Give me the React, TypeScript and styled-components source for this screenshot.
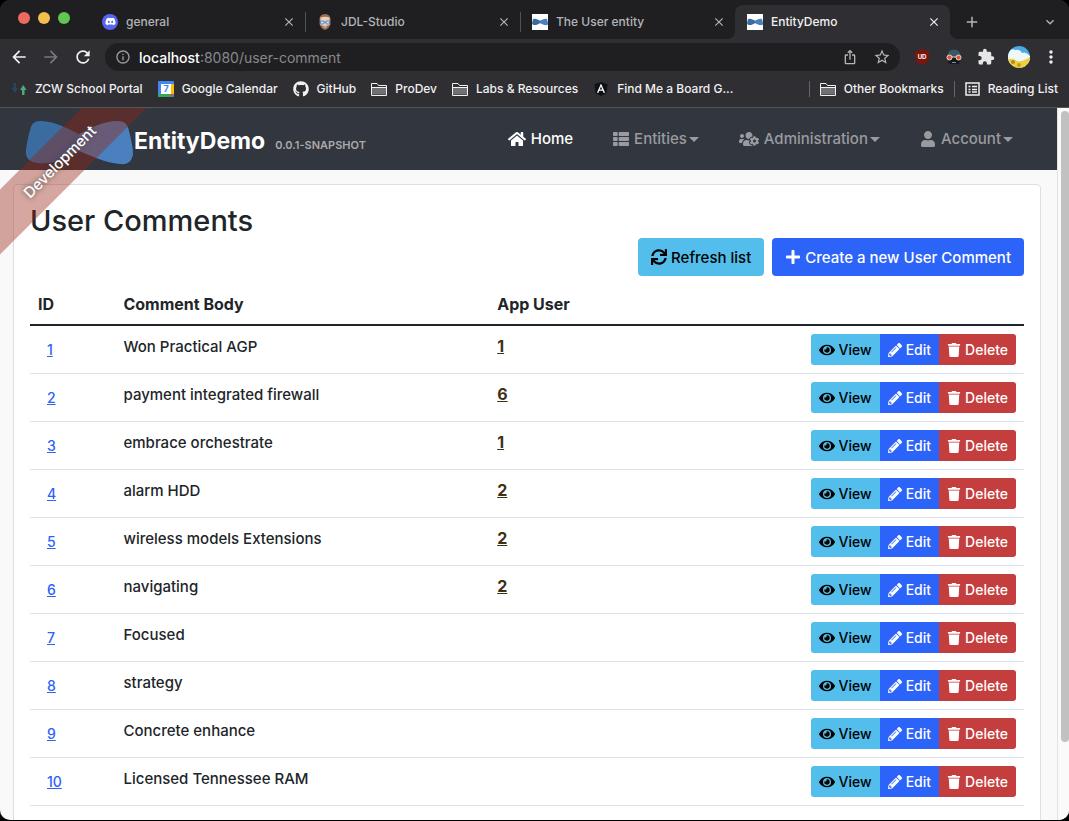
import React from "react";
import styled, { createGlobalStyle, css } from "styled-components";
import {
  FaDiscord,
  FaGithub,
  FaAngular,
  FaHome,
  FaThList,
  FaUsersCog,
  FaUser,
  FaSync,
  FaPlus,
  FaEye,
  FaPencilAlt,
  FaTrash,
} from "react-icons/fa";
import { MdArrowBack, MdArrowForward, MdRefresh, MdExtension, MdInfoOutline, MdStarBorder, MdIosShare, MdClose, MdAdd, MdMoreVert, MdOutlineExpandMore } from "react-icons/md";

const GlobalStyle = createGlobalStyle`
  * { box-sizing: border-box; }
  body {
    margin: 0;
    background: #000;
    font-family: Inter, "Liberation Sans", sans-serif;
    font-weight: 450;
    color: #212529;
  }
  button { font-family: inherit; font-weight: inherit; cursor: pointer; }
  svg { display: block; flex: none; }
`;

const BrowserWindow = styled.div`
  display: flex;
  flex-direction: column;
  height: calc(100vh - 1px);
  border-radius: 10px;
  overflow: hidden;
  background: #2f2f33;
`;

/* ---------- browser chrome ---------- */

const TabStrip = styled.div`
  display: flex;
  align-items: flex-end;
  height: 39px;
  background: #1f1f22;
  padding-right: 11px;
`;

const Lights = styled.div`
  display: flex;
  gap: 8px;
  width: 90px;
  padding-left: 18px;
  height: 36px;
  align-items: center;
  align-self: flex-start;
`;

const Light = styled.span<{ $color: string }>`
  width: 12px;
  height: 12px;
  border-radius: 50%;
  background: ${(p) => p.$color};
`;

const Tab = styled.div<{ $active?: boolean; $divided?: boolean }>`
  position: relative;
  flex: 0 1 215px;
  min-width: 0;
  display: flex;
  align-items: center;
  gap: 8px;
  height: 34px;
  padding: 0 9px 1px 12px;
  font-size: 12px;
  color: ${(p) => (p.$active ? "#f1f1f2" : "#b4b5b8")};
  ${(p) =>
    p.$active &&
    css`
      background: #2f2f33;
      border-radius: 8px 8px 0 0;
      &::before,
      &::after {
        content: "";
        position: absolute;
        bottom: 0;
        width: 8px;
        height: 8px;
      }
      &::before {
        left: -8px;
        background: radial-gradient(circle at 0 0, transparent 8px, #2f2f33 8px);
      }
      &::after {
        right: -8px;
        background: radial-gradient(circle at 100% 0, transparent 8px, #2f2f33 8px);
      }
    `}
  ${(p) =>
    p.$divided &&
    css`
      &::after {
        content: "";
        position: absolute;
        right: -1px;
        top: 7px;
        width: 1px;
        height: 20px;
        background: #515256;
      }
    `}
`;

const TabTitle = styled.span`
  flex: 1;
  overflow: hidden;
  white-space: nowrap;
  text-overflow: ellipsis;
`;

const IconButton = styled.button<{ $size?: number; $color?: string }>`
  display: flex;
  align-items: center;
  justify-content: center;
  flex: none;
  width: ${(p) => p.$size ?? 20}px;
  height: ${(p) => p.$size ?? 20}px;
  padding: 0;
  border: 0;
  background: none;
  color: ${(p) => p.$color ?? "inherit"};
`;

const NewTab = styled.div`
  flex: 1;
  display: flex;
  align-items: center;
  justify-content: space-between;
  height: 34px;
  padding-left: 12px;
  color: #b4b5b8;
`;

const DiscordBadge = styled.span`
  display: flex;
  align-items: center;
  justify-content: center;
  width: 16px;
  height: 16px;
  border-radius: 50%;
  background: #5865f2;
  color: #fff;
`;

const Toolbar = styled.div`
  display: flex;
  align-items: center;
  height: 37px;
  padding: 0 9px 1px 8px;
  background: #2f2f33;
`;

const NavButtons = styled.div`
  display: flex;
  gap: 10px;
  margin-right: 11px;
`;

const AddressBar = styled.div`
  flex: 1;
  display: flex;
  align-items: center;
  gap: 8px;
  height: 28px;
  padding: 0 8px 0 10px;
  border-radius: 14px;
  background: #1f1f22;
  color: #9b9ca0;
`;

const AddressText = styled.div`
  flex: 1;
  font-size: 14px;
  font-weight: 400;
  white-space: nowrap;
  color: #88898d;
  b { font-weight: 450; color: #fff; }
`;

const AddressActions = styled.div`
  display: flex;
  gap: 12px;
  color: #b4b5b8;
`;

const Extensions = styled.div`
  display: flex;
  align-items: center;
  gap: 12px;
  margin-left: 12px;
`;

const BookmarkBar = styled.nav`
  display: flex;
  align-items: center;
  height: 32px;
  padding: 0 11px 6px;
  gap: 15px;
  background: #2f2f33;
  border-bottom: 1px solid #56575b;
`;

const Bookmark = styled.a`
  display: flex;
  align-items: center;
  gap: 8px;
  font-size: 12px;
  white-space: nowrap;
  color: #f1f1f2;
  text-decoration: none;
`;

const BookmarkEnd = styled.div`
  display: flex;
  align-items: center;
  gap: 10px;
  margin-left: auto;
`;

const Divider = styled.span`
  width: 1px;
  height: 16px;
  background: #65666a;
`;

const AngularMark = styled.span`
  display: flex;
  width: 16px;
  justify-content: center;
  color: #0d1118;
  background: radial-gradient(circle, #fff 5px, transparent 5px);
`;

/* ---------- page ---------- */

const Viewport = styled.div`
  flex: 1;
  min-height: 0;
  display: flex;
  background: #f9f9f9;
`;

const Page = styled.div`
  position: relative;
  flex: 1;
  min-width: 0;
  overflow: hidden;
`;

const ScrollTrack = styled.div`
  width: 12px;
  padding: 3px 0 0 3px;
  border-left: 1px solid #e4e4e4;
  background: #fafafa;
`;

const ScrollThumb = styled.div`
  height: 89%;
  border-radius: 5px;
  background: #c1c1c1;
`;

const Ribbon = styled.div`
  position: absolute;
  z-index: 2;
  top: 31px;
  left: -60px;
  width: 240px;
  height: 46px;
  line-height: 46px;
  transform: rotate(-45deg);
  background: rgba(150, 35, 18, 0.4);
  color: #fff;
  font-size: 15px;
  font-weight: 500;
  text-align: center;
  text-shadow: 0 0 5px #444;
  pointer-events: none;
`;

const Navbar = styled.header`
  display: flex;
  align-items: center;
  height: 62px;
  padding: 0 44px 0 25px;
  background: #32363f;
`;

const Brand = styled.a`
  display: flex;
  align-items: center;
  color: #fff;
  text-decoration: none;
  margin-top: 8px;
`;

const BrandName = styled.span`
  padding-bottom: 4px;
  font-size: 23px;
  font-weight: 700;
  line-height: 32px;
`;

const Version = styled.span`
  margin: 4px 0 0 10px;
  font-size: 11px;
  font-weight: 600;
  color: #aaa;
`;

const Menu = styled.nav`
  display: flex;
  gap: 40px;
  margin-left: auto;
`;

const MenuLink = styled.a<{ $active?: boolean }>`
  display: flex;
  align-items: center;
  gap: 5px;
  font-size: 15px;
  font-weight: 500;
  line-height: 26px;
  text-decoration: none;
  color: ${(p) => (p.$active ? "#fff" : "#999b9f")};
`;

const Caret = styled.span`
  margin-left: -3px;
  border: 5px solid transparent;
  border-top-color: currentColor;
  border-bottom: 0;
`;

const Card = styled.main`
  margin: 14px 16px 0 13px;
  min-height: 100%;
  padding: 18px 16px 16px;
  border: 1px solid #dfdfdf;
  border-radius: 4px;
  background: #fff;
`;

const Title = styled.h2`
  margin: 0;
  font-size: 29px;
  line-height: 35px;
  font-weight: 500;
`;

const Actions = styled.div`
  display: flex;
  justify-content: flex-end;
  gap: 8px;
  margin-bottom: 8px;
`;

const tones = {
  info: css`background: #53beec; color: #000;`,
  primary: css`background: #2c63f8; color: #fff;`,
  danger: css`background: #c53e3e; color: #fff;`,
};

const Button = styled.button<{ $tone: keyof typeof tones; $small?: boolean }>`
  display: inline-flex;
  align-items: center;
  gap: 4px;
  height: ${(p) => (p.$small ? 31 : 38)}px;
  padding: 0 ${(p) => (p.$small ? 8 : 13)}px;
  border: 0;
  border-radius: 4px;
  font-size: ${(p) => (p.$small ? 14 : 15)}px;
  font-weight: ${(p) => (p.$small ? 450 : 500)};
  white-space: nowrap;
  ${(p) => tones[p.$tone]}
`;

const ButtonGroup = styled.div`
  display: flex;
  justify-content: flex-end;
  ${Button} { border-radius: 0; }
  ${Button}:first-child { border-radius: 3px 0 0 3px; }
  ${Button}:last-child { border-radius: 0 3px 3px 0; }
`;

const Table = styled.table`
  width: 100%;
  table-layout: fixed;
  border-collapse: separate;
  border-spacing: 0;
  font-size: 15px;
  line-height: 26px;
  th {
    padding: 8px;
    text-align: left;
    font-size: 16px;
    line-height: 24px;
    font-weight: 700;
    border-bottom: 2px solid #212529;
  }
  td {
    padding: 8px;
    vertical-align: top;
    border-bottom: 1px solid #dee2e6;
  }
`;

const Col = styled.col<{ $width?: string }>`
  width: ${(p) => p.$width ?? "auto"};
`;

const IdLink = styled.a`
  display: block;
  padding: 5px 9px;
  font-size: 14px;
  line-height: 21px;
  color: #2c63f8;
`;

const UserLink = styled.a`
  display: inline-block;
  font-size: 16px;
  line-height: 24px;
  font-weight: 700;
  color: #3e2f16;
`;

/* ---------- drawings ---------- */

const BowTieShape = () => (
  <>
    <path d="M17 1 C32 2 43 9 54 14 L54 31 C42 37 29 45 13 43 C4 42 0 38 1 30 C2 21 4 13 6 7 C8 2 11 1 17 1Z" fill="#3a6c9f" />
    <path d="M54 14 C66 8 78 1 93 1 C100 1 103 5 104 11 C106 19 108 27 108 34 C107 41 103 45 95 44 C80 43 67 36 54 31Z" fill="#4a80bd" />
  </>
);

const BowTieLogo = () => (
  <svg width="109" height="46" viewBox="0 0 109 46" aria-hidden="true">
    <BowTieShape />
  </svg>
);

const BowTieFavicon = () => (
  <svg width="16" height="16" viewBox="0 -31 108 108" aria-hidden="true">
    <rect y="-31" width="108" height="108" fill="#fff" />
    <BowTieShape />
  </svg>
);

const JhipsterFace = () => (
  <svg width="16" height="16" viewBox="0 0 16 16" aria-hidden="true">
    <path d="M2.500 5 Q2.500 0.500 8 0 Q13.500 0.500 13.500 5 L13.500 10 Q12 15 8 16 Q4 15 2.500 10Z" fill="#94705c" />
    <path d="M3.500 3.500 Q8 2 12.500 3.500 L12.500 11 Q8 13 3.500 11Z" fill="#f0cdb4" />
    <rect x="3.500" y="7" width="3.500" height="3" rx="1" fill="#cfe2f5" stroke="#4a86c5" />
    <rect x="9" y="7" width="3.500" height="3" rx="1" fill="#cfe2f5" stroke="#4a86c5" />
    <path d="M7 8 H9" stroke="#4a86c5" />
    <path d="M6.500 13 H9.500" stroke="#e8d6ca" />
  </svg>
);

const ZcwIcon = () => (
  <svg width="16" height="16" viewBox="0 0 16 16" aria-hidden="true">
    <path d="M2.500 2 H5 V7 H7 L3.800 12 L0.500 7 H2.500Z" fill="#27475c" />
    <path d="M11 14 H13.500 V9 H15.500 L12.200 4 L9 9 H11Z" fill="#4fa878" />
  </svg>
);

const CalendarIcon = () => (
  <svg width="16" height="16" viewBox="0 0 16 16" aria-hidden="true">
    <rect width="16" height="16" rx="1" fill="#4285f4" />
    <rect x="13" y="3" width="3" height="10" fill="#fbbc04" />
    <rect x="0" y="13" width="13" height="3" fill="#34a853" />
    <path d="M13 13 H16 L13 16Z" fill="#ea4335" />
    <rect x="3" y="3" width="10" height="10" fill="#fff" />
    <text x="8" y="11" textAnchor="middle" fontSize="9" fontWeight="700" fill="#4285f4">7</text>
  </svg>
);

const FolderIcon = () => (
  <svg width="16" height="16" viewBox="0 0 16 16" fill="none" stroke="#f1f1f2" aria-hidden="true">
    <path d="M1 6.500 H15 V13.500 H1Z" fill="#707174" stroke="none" />
    <path d="M0.500 14.500 V2.500 H6 L7.500 4.500 H15.500 V14.500Z" />
    <path d="M1 6.500 H15.500" />
  </svg>
);

const ReadingListIcon = () => (
  <svg width="15" height="16" viewBox="0 0 15 16" fill="none" stroke="#f1f1f2" aria-hidden="true">
    <rect x="1" y="2" width="13" height="12" strokeWidth="1.500" />
    <path d="M3.500 5.500 H5.500 M7 5.500 H12 M3.500 8.500 H5.500 M7 8.500 H12 M3.500 11 H5.500 M7 11 H12" strokeWidth="1.500" />
  </svg>
);

const ShieldIcon = () => (
  <svg width="20" height="20" viewBox="0 0 20 20" aria-hidden="true">
    <path d="M10 2 Q13 4 17 4 V10 Q17 15 10 18 Q3 15 3 10 V4 Q7 4 10 2Z" fill="#7c150c" />
    <text x="10" y="12" textAnchor="middle" fontSize="6" fontWeight="700" fill="#fff">UD</text>
  </svg>
);

const GogglesIcon = () => (
  <svg width="20" height="20" viewBox="0 0 20 20" aria-hidden="true">
    <path d="M3.500 10 Q3.500 2.500 10 2.500 Q16.500 2.500 16.500 10Z" fill="#35596a" />
    <path d="M4.500 10 H15.500 V16.500 Q10 18 4.500 16.500Z" fill="#111820" />
    <circle cx="5.500" cy="10.500" r="2.500" fill="#e2553d" stroke="#f0d5c4" />
    <circle cx="14.500" cy="10.500" r="2.500" fill="#e2553d" stroke="#f0d5c4" />
    <path d="M8 10 H12" stroke="#f0d5c4" />
    <path d="M8 15.500 H12" stroke="#7f98a4" />
  </svg>
);

const Avatar = () => (
  <svg width="22" height="22" viewBox="0 0 22 22" aria-hidden="true">
    <defs>
      <clipPath id="avatar-clip"><circle cx="11" cy="11" r="11" /></clipPath>
    </defs>
    <g clipPath="url(#avatar-clip)">
      <rect width="22" height="22" fill="#4aa9e6" />
      <path d="M0 6 Q3 2 7 4 Q12 3 14 7 Q18 5 22 10 V18 H0Z" fill="#eef8fb" />
      <path d="M0 13 Q5 12 9 15 Q15 16 22 11 V22 H0Z" fill="#edd03f" />
      <circle cx="5" cy="16" r="2" fill="#b58a1e" />
      <circle cx="11" cy="19" r="2" fill="#c79a24" />
    </g>
  </svg>
);

/* ---------- data ---------- */

const tabs = [
  { title: "general", icon: <DiscordBadge><FaDiscord size={11} /></DiscordBadge>, divided: true },
  { title: "JDL-Studio", icon: <JhipsterFace />, divided: true },
  { title: "The User entity", icon: <BowTieFavicon /> },
  { title: "EntityDemo", icon: <BowTieFavicon />, active: true },
];

const bookmarks = [
  { label: "ZCW School Portal", icon: <ZcwIcon /> },
  { label: "Google Calendar", icon: <CalendarIcon /> },
  { label: "GitHub", icon: <FaGithub size={16} /> },
  { label: "ProDev", icon: <FolderIcon /> },
  { label: "Labs & Resources", icon: <FolderIcon /> },
  { label: "Find Me a Board G...", icon: <AngularMark><FaAngular size={16} /></AngularMark> },
];

const comments: { id: number; body: string; user?: number }[] = [
  { id: 1, body: "Won Practical AGP", user: 1 },
  { id: 2, body: "payment integrated firewall", user: 6 },
  { id: 3, body: "embrace orchestrate", user: 1 },
  { id: 4, body: "alarm HDD", user: 2 },
  { id: 5, body: "wireless models Extensions", user: 2 },
  { id: 6, body: "navigating", user: 2 },
  { id: 7, body: "Focused" },
  { id: 8, body: "strategy" },
  { id: 9, body: "Concrete enhance" },
  { id: 10, body: "Licensed Tennessee RAM" },
];

export default function App() {
  return (
    <>
      <GlobalStyle />
      <BrowserWindow>
        <TabStrip>
          <Lights>
            <Light $color="#ec6a5e" />
            <Light $color="#f4bf4f" />
            <Light $color="#61c554" />
          </Lights>
          {tabs.map((t) => (
            <Tab key={t.title} $active={t.active} $divided={t.divided}>
              {t.icon}
              <TabTitle>{t.title}</TabTitle>
              <IconButton $size={14} aria-label={`Close ${t.title}`}><MdClose size={14} /></IconButton>
            </Tab>
          ))}
          <NewTab>
            <IconButton aria-label="New tab"><MdAdd size={18} /></IconButton>
            <IconButton $size={16} aria-label="Search tabs"><MdOutlineExpandMore size={16} /></IconButton>
          </NewTab>
        </TabStrip>

        <Toolbar>
          <NavButtons>
            <IconButton $size={22} $color="#f1f1f2" aria-label="Back"><MdArrowBack size={20} /></IconButton>
            <IconButton $size={22} $color="#77787c" aria-label="Forward"><MdArrowForward size={20} /></IconButton>
            <IconButton $size={22} $color="#f1f1f2" aria-label="Reload"><MdRefresh size={20} /></IconButton>
          </NavButtons>
          <AddressBar>
            <MdInfoOutline size={16} />
            <AddressText><b>localhost</b>:8080/user-comment</AddressText>
            <AddressActions>
              <IconButton aria-label="Share"><MdIosShare size={16} /></IconButton>
              <IconButton aria-label="Bookmark this tab"><MdStarBorder size={18} /></IconButton>
            </AddressActions>
          </AddressBar>
          <Extensions>
            <ShieldIcon />
            <GogglesIcon />
            <IconButton $color="#e6e6e8" aria-label="Extensions"><MdExtension size={18} /></IconButton>
            <Avatar />
            <IconButton $size={18} $color="#f1f1f2" aria-label="Browser menu"><MdMoreVert size={20} /></IconButton>
          </Extensions>
        </Toolbar>

        <BookmarkBar>
          {bookmarks.map((b) => (
            <Bookmark key={b.label} href="#">{b.icon}{b.label}</Bookmark>
          ))}
          <BookmarkEnd>
            <Divider />
            <Bookmark href="#"><FolderIcon />Other Bookmarks</Bookmark>
            <Divider />
            <Bookmark href="#"><ReadingListIcon />Reading List</Bookmark>
          </BookmarkEnd>
        </BookmarkBar>

        <Viewport>
          <Page>
            <Ribbon>Development</Ribbon>
            <Navbar>
              <Brand href="#">
                <BowTieLogo />
                <BrandName>EntityDemo</BrandName>
                <Version>0.0.1-SNAPSHOT</Version>
              </Brand>
              <Menu>
                <MenuLink href="#" $active><FaHome size={18} />Home</MenuLink>
                <MenuLink href="#"><FaThList size={16} />Entities<Caret /></MenuLink>
                <MenuLink href="#"><FaUsersCog size={20} />Administration<Caret /></MenuLink>
                <MenuLink href="#"><FaUser size={16} />Account<Caret /></MenuLink>
              </Menu>
            </Navbar>
            <Card>
              <Title>User Comments</Title>
              <Actions>
                <Button $tone="info"><FaSync size={16} />Refresh list</Button>
                <Button $tone="primary"><FaPlus size={16} />Create a new User Comment</Button>
              </Actions>
              <Table>
                <colgroup>
                  <Col $width="8.6%" />
                  <Col $width="37.6%" />
                  <Col />
                  <Col $width="23%" />
                </colgroup>
                <thead>
                  <tr>
                    <th>ID</th>
                    <th>Comment Body</th>
                    <th>App User</th>
                    <th aria-label="Actions" />
                  </tr>
                </thead>
                <tbody>
                  {comments.map((c) => (
                    <tr key={c.id}>
                      <td><IdLink href="#">{c.id}</IdLink></td>
                      <td>{c.body}</td>
                      <td>{c.user && <UserLink href="#">{c.user}</UserLink>}</td>
                      <td>
                        <ButtonGroup>
                          <Button $small $tone="info"><FaEye size={16} />View</Button>
                          <Button $small $tone="primary"><FaPencilAlt size={14} />Edit</Button>
                          <Button $small $tone="danger"><FaTrash size={14} />Delete</Button>
                        </ButtonGroup>
                      </td>
                    </tr>
                  ))}
                </tbody>
              </Table>
            </Card>
          </Page>
          <ScrollTrack><ScrollThumb /></ScrollTrack>
        </Viewport>
      </BrowserWindow>
    </>
  );
}
